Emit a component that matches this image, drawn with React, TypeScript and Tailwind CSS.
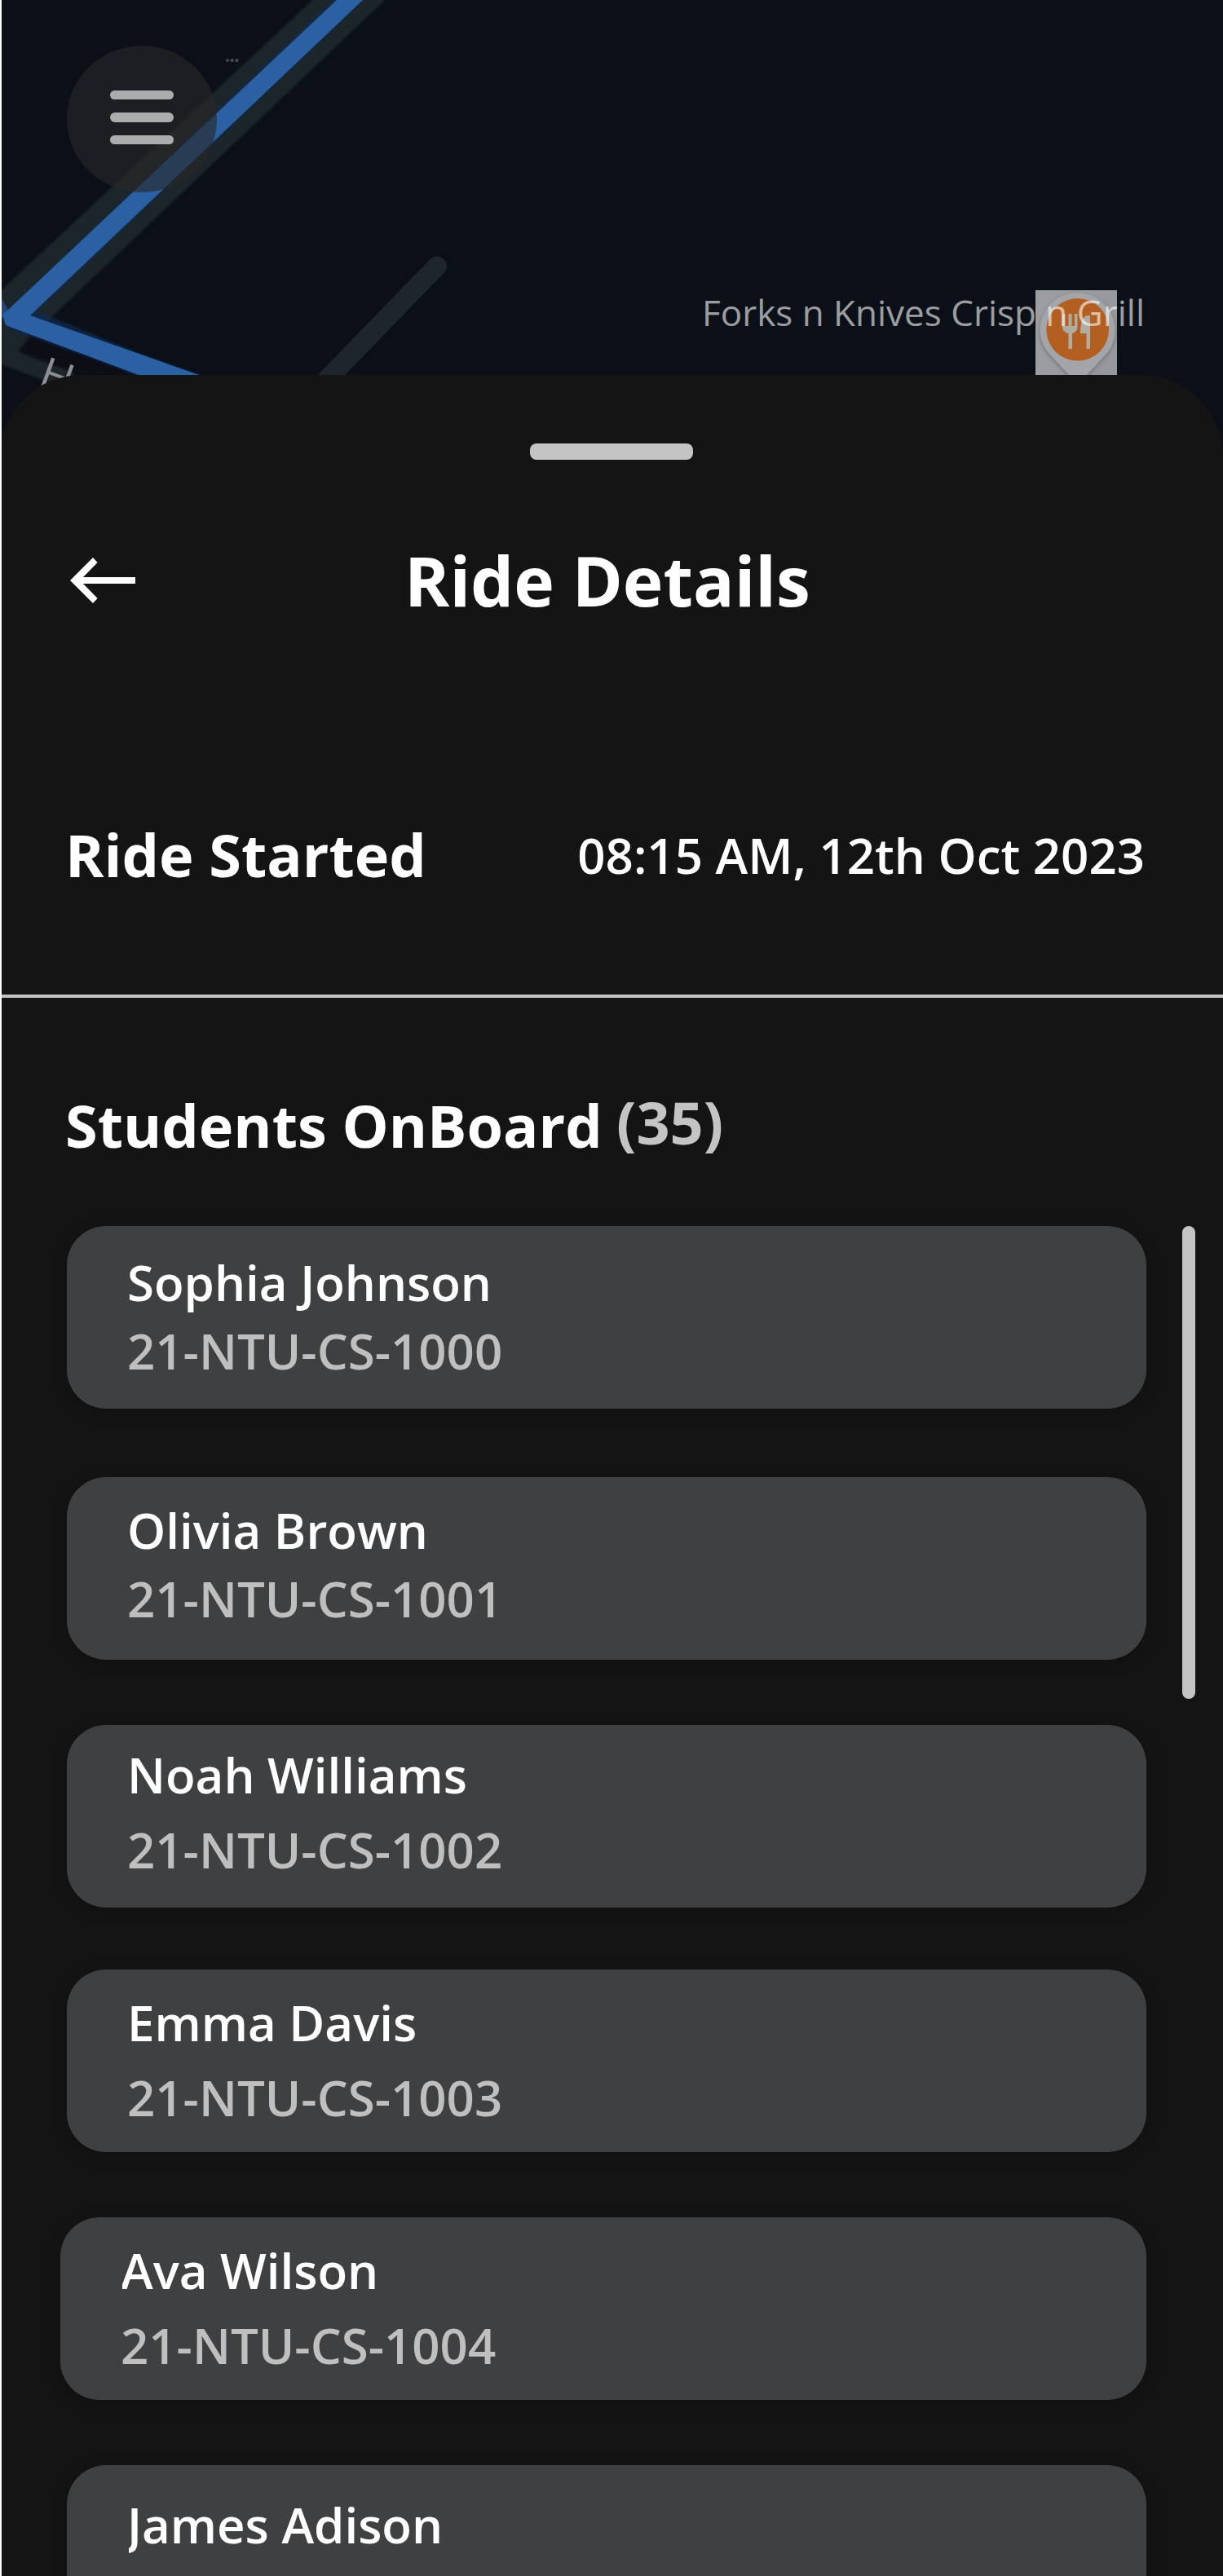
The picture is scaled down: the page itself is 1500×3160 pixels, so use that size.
import React from "react";

type Student = { name: string; id?: string; card: string; gap?: string };

const students: Student[] = [
  { name: "Sophia Johnson", id: "21-NTU-CS-1000", card: "w-[1324px] pt-[28px]", gap: "mt-0.5" },
  { name: "Olivia Brown", id: "21-NTU-CS-1001", card: "mt-[84px] w-[1324px] pt-[24px]", gap: "mt-0.5" },
  { name: "Noah Williams", id: "21-NTU-CS-1002", card: "mt-[80px] w-[1324px] pt-[20px]", gap: "mt-2.5" },
  { name: "Emma Davis", id: "21-NTU-CS-1003", card: "mt-[76px] w-[1324px] pt-[24px]", gap: "mt-2.5" },
  { name: "Ava Wilson", id: "21-NTU-CS-1004", card: "mt-[80px] w-[1332px] pt-[24px]", gap: "mt-2.5" },
  { name: "James Adison", card: "mt-[80px] w-[1324px] pt-[32px]" },
];

function MapBackground() {
  return (
    <svg className="absolute inset-0" width="1500" height="580" viewBox="0 0 1500 580" aria-hidden="true">
      <defs>
        <filter id="soft" x="-10%" y="-10%" width="120%" height="120%">
          <feGaussianBlur stdDeviation="1.6" />
        </filter>
        <filter id="softer" x="-20%" y="-20%" width="140%" height="140%">
          <feGaussianBlur stdDeviation="2.5" />
        </filter>
        <clipPath id="tile">
          <rect x="1270" y="356" width="100" height="110" />
        </clipPath>
        <linearGradient id="tileFill" x1="0" y1="0" x2="1" y2="0.3">
          <stop offset="0" stopColor="#9d9fa3" />
          <stop offset="1" stopColor="#97989c" />
        </linearGradient>
      </defs>
      <rect width="1500" height="580" fill="#0b1018" />
      {/* roads */}
      <polygon points="386,-2 474,-2 62,390 45,410 38,418 23,431 90,456 90,480 2,447 -8,447 -8,365" fill="#1e252c" filter="url(#soft)" />
      <polygon points="37,412 23,431 90,456 170,460" fill="#0b0f15" filter="url(#soft)" />
      <polygon points="38,386 245,460 244,470 180,464 6,401" fill="#0d2449" filter="url(#soft)" />
      <line x1="536" y1="326.500" x2="387" y2="480" stroke="#1e252d" strokeWidth="24" strokeLinecap="round" />
      {/* route */}
      <polyline points="430,-3 22,386 210,464" fill="none" stroke="#10294f" strokeWidth="26" strokeOpacity="0.7" filter="url(#soft)" />
      <polygon points="0,362 14,388 3,390 0,388" fill="#27457b" />
      <polygon points="413,0 445,0 37,387 247,461 173,461 7,399 3,386 10,380" fill="#2b61a3" />
      {/* street poi dots */}
      <circle cx="279" cy="74" r="2" fill="#45484a" />
      <circle cx="284.700" cy="74" r="2.200" fill="#45484a" />
      <circle cx="290.500" cy="74" r="2.200" fill="#45484a" />
      {/* restaurant pin */}
      <g clipPath="url(#tile)">
        <rect x="1270" y="356" width="100" height="110" fill="url(#tileFill)" />
        <path d="M1322 472 L1286 433 C1279 424 1275.500 414 1275.500 405 A46 46 0 0 1 1367.500 405 C1367.500 414 1365 424 1358 433 Z" fill="#6f7276" filter="url(#softer)" transform="translate(0 2)" />
        <path d="M1322 472 L1286 433 C1279 424 1275.500 414 1275.500 405 A46 46 0 0 1 1367.500 405 C1367.500 414 1365 424 1358 433 Z" fill="#a3a5a8" />
        <circle cx="1321.700" cy="404.300" r="38.300" fill="#b25f21" />
        <path d="M1303 385 h3.500 v15 h4 v-15 h4 v15 h3.500 v-15 h3.500 v16 q0 6 -6.500 8 v19 h-4.500 v-19 q-7.500 -2 -7.500 -8 Z" fill="#b0ada0" />
        <path d="M1337 387 v41 h-4.500 v-19 h-7.500 q0 -19 8 -22 Z" fill="#b0ada0" />
      </g>
    </svg>
  );
}

function MenuButton() {
  return (
    <button
      aria-label="Menu"
      className="absolute top-[56px] left-[82px] flex h-[180px] w-[184px] flex-col items-center gap-4 rounded-[50%] bg-[#282828]/63 pt-[55px]"
    >
      <span className="h-[11px] w-[78px] rounded-full bg-[#abacae]" />
      <span className="h-[12px] w-[78px] rounded-full bg-[#abacae]" />
      <span className="h-[11px] w-[78px] rounded-full bg-[#abacae]" />
    </button>
  );
}

function StudentCard({ name, id, card, gap = "" }: Student) {
  return (
    <li
      className={`h-[224px] shrink-0 rounded-[48px] bg-[#3f4042] pl-[74px] text-[60px] leading-[82px] font-semibold shadow-[0_4px_20px_rgba(0,0,0,0.2)] ${card}`}
    >
      <p className="text-white [clip-path:inset(0_0_0_2px)]">{name}</p>
      {id && <p className={`text-[#bfbfbf] ${gap}`}>{id}</p>}
    </li>
  );
}

export default function App() {
  return (
    <div className="relative h-[3160px] w-[1500px] overflow-hidden bg-[#141414] font-['Open_Sans',sans-serif] text-white">
      <div className="relative h-[460px]">
        <MapBackground />
        <span className="absolute top-[433px] left-[51px] rotate-[20deg] text-[54px] leading-none text-[#8c8f92]">H</span>
        <span className="absolute top-[353px] left-[861px] text-[44px] leading-[60px] whitespace-nowrap text-white/60">
          Forks n Knives Crisp n Grill
        </span>
        <MenuButton />
      </div>

      <main className="relative flex h-[2700px] flex-col rounded-t-[100px] bg-[#141414]">
        <div className="mt-[84px] h-5 w-[200px] shrink-0 self-center rounded-lg bg-[#c4c4c4]" />

        <header className="mt-[90px] grid h-[115px] shrink-0 grid-cols-[496px_1fr] items-center">
          <svg className="ml-[86px]" width="80" height="56" viewBox="86 684 80 56" fill="#fff" aria-label="Back">
            <path d="M166 708 H102 L119.600 690 L114 684 L86 712 L114 740 L119.600 734 L102 716 H166Z" />
          </svg>
          <h1 className="text-[84px] leading-[115px] font-bold">Ride Details</h1>
        </header>

        <section className="mt-[230px] flex h-[225px] shrink-0 items-start justify-between border-b-4 border-[#c4c4c4] pr-[96px] pl-[80px]">
          <h2 className="text-[72px] leading-[98px] font-bold">Ride Started</h2>
          <p className="pt-[9px] text-[60px] leading-[82px] font-semibold">08:15 AM, 12th Oct 2023</p>
        </section>

        <h2 className="mt-[103px] flex h-[102px] shrink-0 items-start pl-[80px] text-[72px] leading-[98px] font-bold">
          <span className="w-[676px] pt-1">Students OnBoard</span>
          <span className="text-[#c4c4c4]">(35)</span>
        </h2>

        <div className="mt-[75px] flex items-start justify-end">
          <ul className="flex flex-col items-end">
            {students.map((s) => (
              <StudentCard key={s.name} {...s} />
            ))}
          </ul>
          <div className="mr-[34px] ml-[44px] h-[580px] w-4 rounded-full bg-[#c4c4c4]" />
        </div>
      </main>

      <div className="absolute inset-y-0 left-0 w-0.5 bg-white" />
    </div>
  );
}
